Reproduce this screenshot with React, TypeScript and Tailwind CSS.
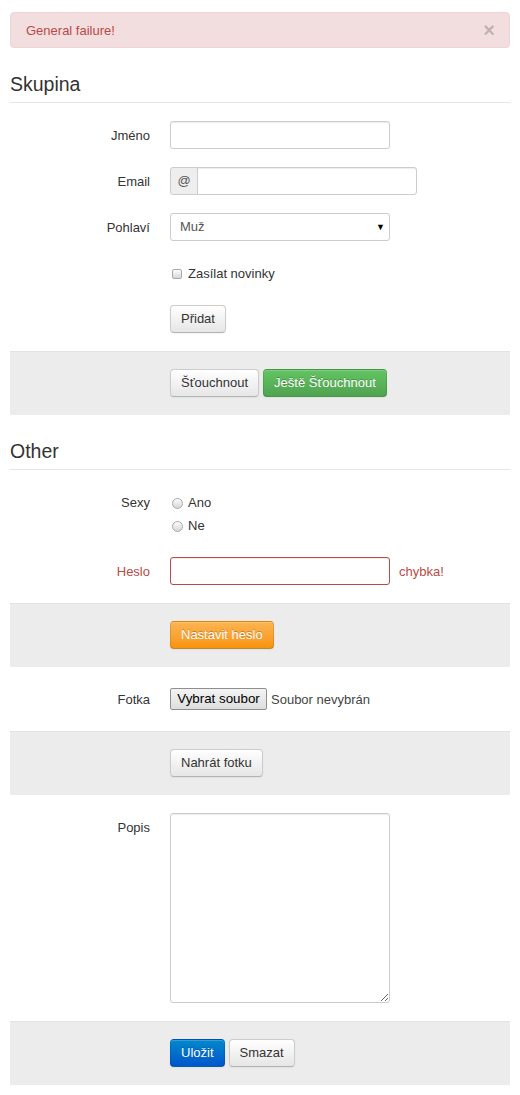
import { ReactNode } from "react";

const btnBase =
  "h-[28px] px-[10px] rounded-[4px] border text-[13px] leading-[18px] shadow-[inset_0_1px_0_rgba(255,255,255,0.2),0_1px_2px_rgba(0,0,0,0.05)]";
const btnDefault = `${btnBase} bg-linear-to-b from-white to-[#e6e6e6] border-[#ccc] border-b-[#b3b3b3] text-[#333]`;
const btnColored = `${btnBase} border-[rgba(0,0,0,0.1)] border-b-[rgba(0,0,0,0.25)] text-white [text-shadow:0_-1px_0_rgba(0,0,0,0.25)]`;

const inputCls =
  "h-[28px] w-[220px] px-[6px] rounded-[3px] border bg-white text-[13px] text-[#555] shadow-[inset_0_1px_1px_rgba(0,0,0,0.075)] outline-none";

function Legend({ children }: { children: ReactNode }) {
  return (
    <div className="h-[37px] leading-[36px] text-[19.5px] text-[#333] border-b border-[#e5e5e5] mb-[18px]">
      {children}
    </div>
  );
}

function Row({ label, error, children }: { label?: string; error?: boolean; children: ReactNode }) {
  return (
    <div className="flex mb-[18px]">
      <div className={`w-[140px] shrink-0 text-right pt-[6px] ${error ? "text-[#b94a48]" : ""}`}>{label}</div>
      <div className="ml-[20px]">{children}</div>
    </div>
  );
}

function Actions({ children }: { children: ReactNode }) {
  return (
    <div className="mb-[18px] bg-[#ececec] border-t border-[#e3e3e3] pt-[17px] pb-[18px] pl-[160px] flex gap-[4px]">
      {children}
    </div>
  );
}

function Radio({ label }: { label: string }) {
  return (
    <div className="flex items-center h-[18px]">
      <span className="w-[11px] h-[11px] ml-[2px] rounded-full border border-[#a9a9a9] bg-linear-to-b from-[#fdfdfd] to-[#d6d6d6]" />
      <span className="ml-[5px]">{label}</span>
    </div>
  );
}

export default function App() {
  return (
    <div className="px-[10px] pt-[12px] pb-[10px] font-['Liberation_Sans',Arial,sans-serif] text-[13px] leading-[18px] text-[#333] bg-white">
      {/* Alert */}
      <div className="flex justify-between items-start mb-[18px] pl-[15px] pr-[14px] pt-[8px] pb-[7px] bg-[#f2dede] border border-[#eed3d7] rounded-[4px] text-[#b94a48]">
        <span className="pt-px">General failure!</span>
        <span className="text-[20px] font-bold leading-[18px] text-black opacity-20">×</span>
      </div>

      <Legend>Skupina</Legend>

      <Row label="Jméno">
        <input className={`${inputCls} border-[#ccc]`} />
      </Row>

      <Row label="Email">
        <div className="flex">
          <span className="h-[28px] w-[28px] flex items-center justify-center bg-[#eee] border border-[#ccc] rounded-l-[3px] text-[#555]">
            @
          </span>
          <input className={`${inputCls} -ml-px rounded-l-none border-[#ccc]`} />
        </div>
      </Row>

      <Row label="Pohlaví">
        <div className="relative w-[220px]">
          <select className={`${inputCls} appearance-none pl-[9px] border-[#ccc] shadow-none`}>
            <option>Muž</option>
          </select>
          <span className="absolute right-[5px] top-[5px] text-[9px] text-black pointer-events-none">▼</span>
        </div>
      </Row>

      <div className="flex mb-[18px] h-[28px]">
        <div className="w-[140px] shrink-0" />
        <div className="ml-[20px] pt-[6px] flex items-center h-[28px] pb-[4px]">
          <span className="w-[10px] h-[10px] ml-[2px] rounded-[2px] border border-[#a9a9a9] bg-linear-to-b from-[#fdfdfd] to-[#d6d6d6]" />
          <span className="ml-[6px]">Zasílat novinky</span>
        </div>
      </div>

      <div className="flex mb-[18px]">
        <div className="w-[160px] shrink-0" />
        <button className={btnDefault}>Přidat</button>
      </div>

      <Actions>
        <button className={btnDefault}>Šťouchnout</button>
        <button className={`${btnColored} bg-linear-to-b from-[#62c462] to-[#51a351]`}>Ještě Šťouchnout</button>
      </Actions>

      <Legend>Other</Legend>

      <div className="flex mb-[18px]">
        <div className="w-[140px] shrink-0 text-right pt-[6px]">Sexy</div>
        <div className="ml-[20px] pt-[6px] pb-[4px] flex flex-col gap-[5px]">
          <Radio label="Ano" />
          <Radio label="Ne" />
        </div>
      </div>

      <Row label="Heslo" error>
        <div className="flex items-center">
          <input className={`${inputCls} border-[#b94a48]`} />
          <span className="ml-[9px] pt-px text-[#b94a48]">chybka!</span>
        </div>
      </Row>

      <Actions>
        <button className={`${btnColored} bg-linear-to-b from-[#fbb450] to-[#f89406]`}>Nastavit heslo</button>
      </Actions>

      <div className="flex mb-[18px] h-[28px]">
        <div className="w-[140px] shrink-0 text-right pt-[6px]">Fotka</div>
        <div className="ml-[20px] pt-[3px] flex items-start">
          <button className="h-[22px] w-[97px] rounded-[2px] border border-[#8f8f8f] bg-linear-to-b from-[#f4f4f4] to-[#dedede] text-[13.33px] leading-[18px] text-black">
            Vybrat soubor
          </button>
          <span className="ml-[4px] pt-[3px] text-[13px] text-[#444]">Soubor nevybrán</span>
        </div>
      </div>

      <Actions>
        <button className={btnDefault}>Nahrát fotku</button>
      </Actions>

      <div className="flex mb-[18px]">
        <div className="w-[140px] shrink-0 text-right pt-[6px]">Popis</div>
        <div className="ml-[20px] flex">
          <textarea className="w-[220px] h-[190px] px-[6px] py-[4px] rounded-[3px] border border-[#ccc] shadow-[inset_0_1px_1px_rgba(0,0,0,0.075)] outline-none block" />
        </div>
      </div>

      <Actions>
        <button className={`${btnColored} bg-linear-to-b from-[#0088cc] to-[#0055cc]`}>Uložit</button>
        <button className={btnDefault}>Smazat</button>
      </Actions>
    </div>
  );
}
